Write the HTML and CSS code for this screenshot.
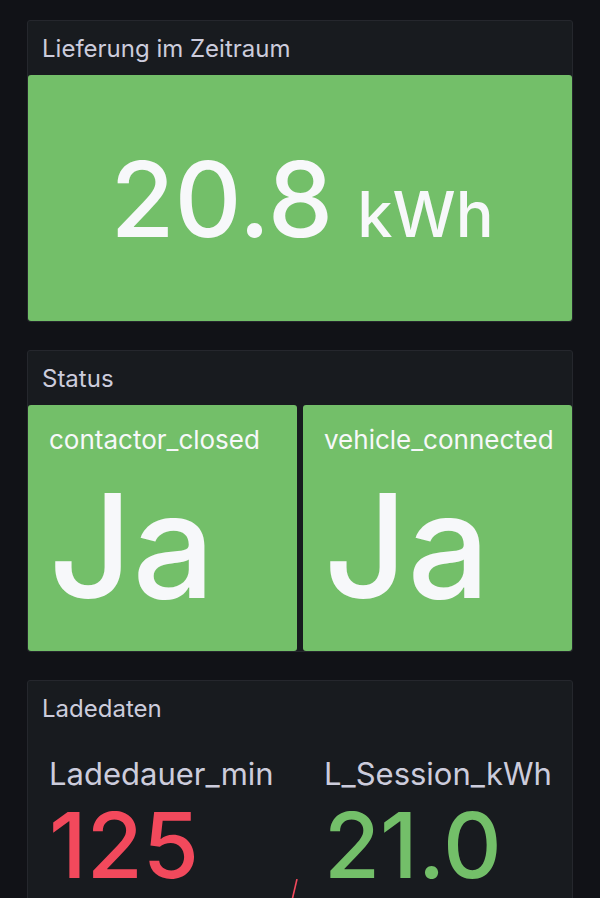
FILE: index.html
```html
<!DOCTYPE html>
<html lang="de">
<head>
<meta charset="utf-8">
<title>Dashboard</title>
<link rel="stylesheet" href="styles.css">
</head>
<body>
<main class="dash">
  <section class="panel">
    <header class="panel-title">Lieferung im Zeitraum</header>
    <div class="panel-body">
      <div class="tile tile-big">
        <span class="big-value">20.8</span><span class="big-unit">kWh</span>
      </div>
    </div>
  </section>

  <section class="panel">
    <header class="panel-title">Status</header>
    <div class="panel-body split">
      <div class="tile tile-status">
        <div class="tile-label">contactor_closed</div>
        <div class="tile-value">Ja</div>
      </div>
      <div class="tile tile-status">
        <div class="tile-label">vehicle_connected</div>
        <div class="tile-value">Ja</div>
      </div>
    </div>
  </section>

  <section class="panel panel-open">
    <header class="panel-title">Ladedaten</header>
    <div class="panel-body split">
      <div class="stat">
        <svg class="spark" width="20" height="30" viewBox="0 0 20 30"><path d="M11 0 L4 30" stroke="#f2495c" stroke-width="1.6" fill="none"/></svg>
        <div class="stat-label">Ladedauer_min</div>
        <div class="stat-value red">125</div>
      </div>
      <div class="stat">
        <div class="stat-label">L_Session_kWh</div>
        <div class="stat-value green">21.0</div>
      </div>
    </div>
  </section>
</main>
</body>
</html>
```
FILE: styles.css
```css
* { box-sizing: border-box; }
html, body {
  margin: 0;
  padding: 0;
  background: #111217;
  height: 100%;
  overflow: hidden;
}
body {
  font-family: Inter, "Noto Sans", sans-serif;
  color: #ccccdc;
}
.dash {
  padding: 20px 27px 0 27px;
  display: flex;
  flex-direction: column;
  gap: 28px;
}
.panel {
  background: #181b1f;
  border: 1px solid #25272d;
  border-radius: 3px;
  display: flex;
  flex-direction: column;
}
.panel-title {
  height: 54px;
  display: flex;
  align-items: center;
  padding-left: 14px;
  font-size: 24px;
  font-weight: 400;
  color: #ccccdc;
}
.panel-body {
  padding: 0;
}
.split {
  display: grid;
  grid-template-columns: 1fr 1fr;
  gap: 6px;
}
.tile {
  background: #73bf69;
  border-radius: 3px;
  color: #f7f8fa;
}
.tile-big {
  height: 246px;
  display: flex;
  align-items: baseline;
  justify-content: center;
  padding-top: 72px;
  padding-left: 4px;
}
.big-value {
  font-size: 104px;
  font-weight: 500;
  line-height: 1;
}
.big-unit {
  font-size: 63px;
  font-weight: 500;
  margin-left: 24px;
  line-height: 1;
}
.tile-status {
  height: 246px;
  padding: 20px 0 0 21px;
}
.tile-label {
  font-size: 26px;
  line-height: 30px;
  font-weight: 400;
}
.tile-value {
  font-size: 145px;
  font-weight: 500;
  line-height: 1;
  margin-top: 18px;
}
.panel-open {
  height: 300px;
}
.stat {
  position: relative;
  padding: 22px 0 0 21px;
}
.spark {
  position: absolute;
  left: 258px;
  top: 144px;
}
.stat-label {
  font-size: 31px;
  line-height: 34px;
  color: #ccccdc;
}
.stat-value {
  font-size: 91px;
  font-weight: 500;
  line-height: 1;
  margin-top: 9px;
}
.red { color: #f2495c; }
.green { color: #73bf69; }
```
